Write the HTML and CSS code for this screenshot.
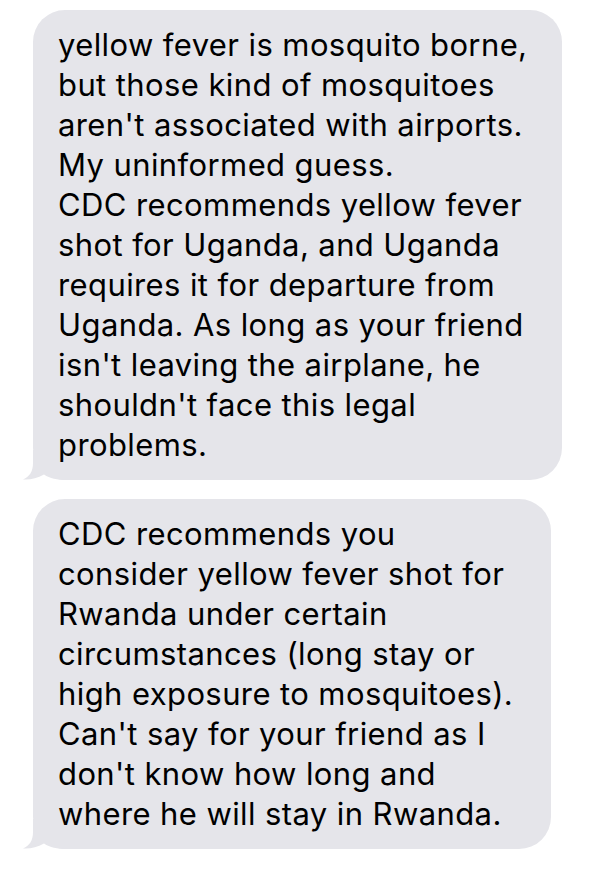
FILE: index.html
```html
<!DOCTYPE html>
<html lang="en">
<head>
<meta charset="utf-8">
<title>Messages</title>
<link rel="stylesheet" href="styles.css">
</head>
<body>
<main class="thread">
  <div class="bubble bubble-first">
    <p class="msg">yellow fever is mosquito borne,<br>but those kind of mosquitoes<br>aren't associated with airports.<br>My uninformed guess.<br>CDC recommends yellow fever<br>shot for Uganda, and Uganda<br>requires it for departure from<br>Uganda. As long as your friend<br>isn't leaving the airplane, he<br>shouldn't face this legal<br>problems.</p>
    <svg class="tail" width="44" height="30" viewBox="0 0 44 30" aria-hidden="true"><path d="M10 0 L10 13 C10 21 7 26.5 0 29.5 C7 30 14 28.5 21 24.5 C27 28.5 34 30 44 30 L44 0 Z"/></svg>
  </div>
  <div class="bubble bubble-second">
    <p class="msg">CDC recommends you<br>consider yellow fever shot for<br>Rwanda under certain<br>circumstances (long stay or<br>high exposure to mosquitoes).<br>Can't say for your friend as I<br>don't know how long and<br>where he will stay in Rwanda.</p>
    <svg class="tail" width="44" height="30" viewBox="0 0 44 30" aria-hidden="true"><path d="M10 0 L10 13 C10 21 7 26.5 0 29.5 C7 30 14 28.5 21 24.5 C27 28.5 34 30 44 30 L44 0 Z"/></svg>
  </div>
</main>
</body>
</html>
```
FILE: styles.css
```css
html, body {
  margin: 0;
  padding: 0;
  background: #ffffff;
}

.thread {
  display: flex;
  flex-direction: column;
  align-items: flex-start;
  gap: 19px;
  padding: 10px 0 0 33px;
}

.bubble {
  position: relative;
  box-sizing: border-box;
  background: #e5e5ea;
  border-radius: 32px;
  padding: 15px 20px 15px 25px;
}

.bubble-first {
  width: 529px;
}

.bubble-second {
  width: 518px;
}

.msg {
  margin: 0;
  position: relative;
  z-index: 1;
  font-family: "Inter", "Liberation Sans", sans-serif;
  font-size: 31px;
  line-height: 40px;
  letter-spacing: 0.4px;
  color: #000000;
  white-space: nowrap;
}

.tail {
  position: absolute;
  left: -10px;
  bottom: 0;
  fill: #e5e5ea;
}
```
